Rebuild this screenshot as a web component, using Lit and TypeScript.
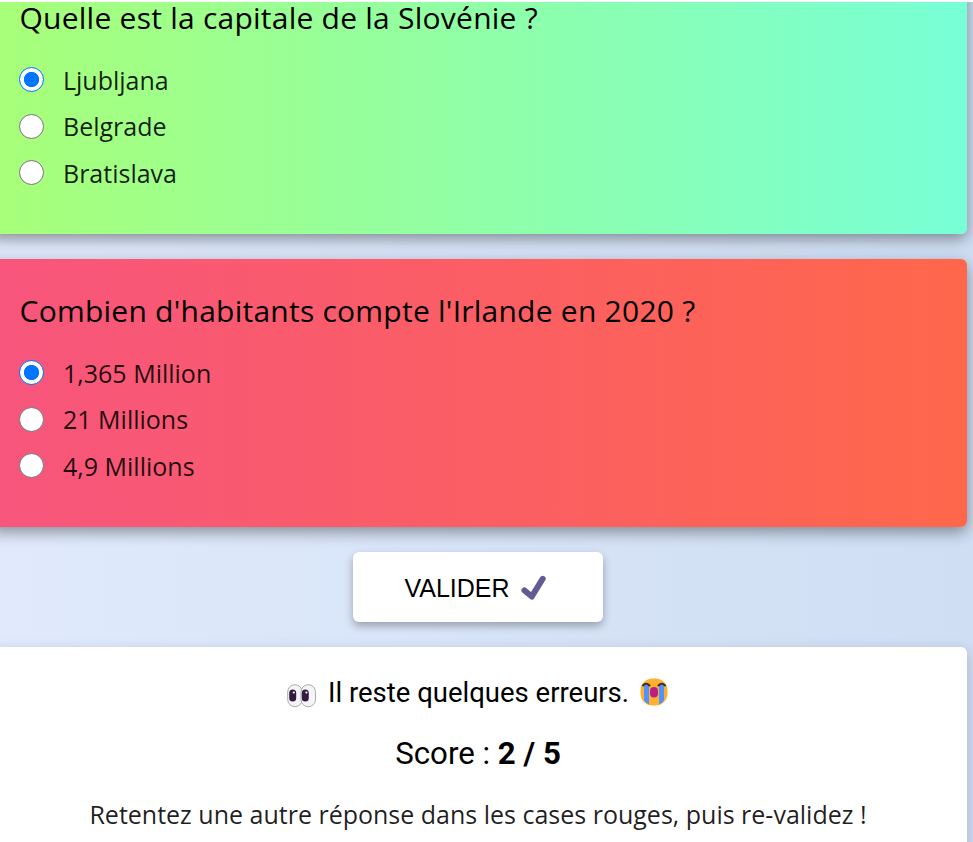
import { LitElement, html, css, svg } from "lit";
import { customElement, property } from "lit/decorators.js";

@customElement("quiz-question")
class QuizQuestion extends LitElement {
  @property() heading = "";
  @property({ attribute: false }) options: string[] = [];
  @property() name = "";

  static styles = css`
    :host { display: block; box-sizing: border-box; height: 268px; padding: 37px 31px 0 30.5px; border-radius: 6px;
      box-shadow: 0 5px 15px rgba(0, 0, 0, 0.4); }
    :host([correct]) { background: linear-gradient(to right, #a8ff78, #78ffd6); }
    :host([wrong]) { background: linear-gradient(to right, #f7557d, #ff674b); }
    h4 { margin: 0 0 26px; font-weight: 400; font-size: 30px; line-height: 30px; letter-spacing: 0.24px; white-space: nowrap; }
    label { display: flex; align-items: center; height: 46.6px; font-size: 25px; line-height: 34px; color: rgba(0, 0, 0, 0.88); }
    span { margin-top: -4.8px; }
    input { appearance: none; box-sizing: border-box; width: 25px; height: 25px; margin: -5.6px 19px 0 -0.5px;
      border: 1.5px solid #767676; border-radius: 50%; background: #fff; }
    input:checked { border-color: #0075ff; background: radial-gradient(circle, #0075ff 7.2px, #fff 8px); }
  `;

  render() {
    return html`<h4>${this.heading}</h4>
      ${this.options.map((o, i) => html`<label><input type="radio" name=${this.name} ?checked=${i === 0} /><span>${o}</span></label>`)}`;
  }
}

const check = svg`<path d="M3.5 15.5 L10.8 21.5 L21.7 3.8" fill="none" stroke="#635994" stroke-width="6" stroke-linecap="round" stroke-linejoin="round"/>`;

const eyes = svg`
  <g fill="#f5f4f6" stroke="#aaa9ad" stroke-width="1">
    <rect x=".7" y=".7" width="14.5" height="22" rx="7.2"/>
    <rect x="14" y=".7" width="14.5" height="22" rx="7.2"/>
  </g>
  <rect x="2.2" y="5.5" width="7" height="12" rx="3.5" fill="#321b41"/>
  <rect x="14.8" y="5.5" width="7" height="12" rx="3.5" fill="#321b41"/>
  <circle cx="6.8" cy="8.5" r="1.1" fill="#fff"/><circle cx="19.4" cy="8.5" r="1.1" fill="#fff"/>`;

const sob = svg`
  <rect x=".5" y=".5" width="27" height="27" rx="12" fill="#ffb02e"/>
  <path d="M4 7h5v19.200Q6 25.500 4 22.500ZM19 7h5v15.500Q22 25.500 19 26.200Z" fill="#5092ff"/>
  <path d="M3 7.500Q6 4 9.500 7.500M18.500 7.500Q22 4 25 7.500" fill="none" stroke="#402a32" stroke-width="2" stroke-linecap="round"/>
  <rect x="10" y="9" width="8" height="10.500" rx="4" fill="#bb1d80"/>`;

@customElement("app-root")
class AppRoot extends LitElement {
  static styles = css`
    :host { display: block; height: 842px; overflow: hidden; color: #000; font-family: "Open Sans", sans-serif;
      box-sizing: border-box; border-top: 2px solid #fff; background: linear-gradient(to right, #e0eafc, #cfdef3); }
    .quiz { display: flex; flex-direction: column; gap: 25px; width: 978px; margin: -36px 0 0 -11px; }
    .submit { display: flex; align-items: center; justify-content: center; gap: 11px; align-self: center;
      width: 250px; height: 70px; padding: 2px 5px 0 0; box-sizing: border-box; border: 0; border-radius: 6px; background: #fff; color: #000;
      font: 25px "Liberation Sans", sans-serif; box-shadow: 0 4px 8px rgba(0, 0, 0, 0.3); }
    .result { box-sizing: border-box; height: 268px; padding-top: 25px; border-radius: 6px; background: #fff; text-align: center;
      box-shadow: 0 5px 15px rgba(0, 0, 0, 0.2); }
    p { margin: 0; white-space: nowrap; }
    .message { display: flex; align-items: center; justify-content: center; gap: 11px; height: 42px;
      font: 27.5px/42px Roboto, sans-serif; padding-right: 1px; }
    .message svg { margin-top: -2px; }
    .message .eyes { margin-top: 5px; }
    .score { margin-top: 19px; font: 31.25px/42px Roboto, sans-serif; }
    .hint { margin-top: 22px; font-size: 25px; line-height: 34px; color: rgba(0, 0, 0, 0.88); }
  `;

  render() {
    return html`<main class="quiz">
      <quiz-question correct name="capital" heading="Quelle est la capitale de la Slovénie ?"
        .options=${["Ljubljana", "Belgrade", "Bratislava"]}></quiz-question>
      <quiz-question wrong name="population" heading="Combien d'habitants compte l'Irlande en 2020 ?"
        .options=${["1,365 Million", "21 Millions", "4,9 Millions"]}></quiz-question>
      <button class="submit">VALIDER <svg width="26" height="26" viewBox="0 0 26 26">${check}</svg></button>
      <section class="result">
        <p class="message"><svg class="eyes" width="30" height="24" viewBox="0 0 30 24">${eyes}</svg><span>Il reste quelques erreurs.</span><svg width="28" height="28" viewBox="0 0 28 28">${sob}</svg></p>
        <p class="score">Score : <b>2 / 5</b></p>
        <p class="hint">Retentez une autre réponse dans les cases rouges, puis re-validez !</p>
      </section>
    </main>`;
  }
}
